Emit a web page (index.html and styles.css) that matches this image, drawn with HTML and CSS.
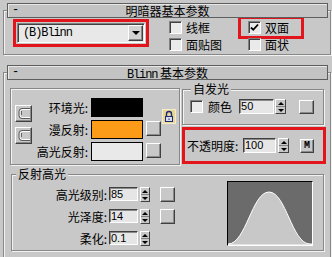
FILE: index.html
```html
<!DOCTYPE html>
<html lang="zh">
<head>
    <meta charset="UTF-8">
    <title>明暗器基本参数</title>
    <link rel="stylesheet" href="styles.css">
</head>
<body>

<div class="rollout">
    <div class="rollout-head"><span class="minus">-</span><span class="rollout-title">明暗器基本参数</span><span></span></div>
    <div class="rollout-body body-shader">
        <div class="mark mark-shader">
            <div class="dropdown">
                <span class="latin">(B)Blinn</span>
                <span class="dropdown-btn"><i class="tri-down"></i></span>
            </div>
        </div>
        <div class="checks">
            <div class="check"><span class="box"></span>线框</div>
            <div class="check mark mark-twosided">
                <span class="box"><svg width="11" height="11" viewBox="0 0 11 11"><path d="M2 5.5l2.3 2.3L9 2.5" fill="none" stroke="#000" stroke-width="1.8"/></svg></span>双面
            </div>
            <div class="check"><span class="box"></span>面贴图</div>
            <div class="check"><span class="box"></span>面状</div>
        </div>
    </div>
</div>

<div class="rollout rollout-next">
    <div class="rollout-head"><span class="minus">-</span><span class="rollout-title"><span class="latin">Blinn</span> 基本参数</span><span></span></div>
    <div class="rollout-body body-basic">
        <div class="top-row">
            <div class="group colors">
                <div class="link-col">
                    <span class="btn link-btn">
                        <svg width="12" height="11" viewBox="0 0 12 11"><path d="M12 1.5H4a2 2 0 0 0-2 2v4a2 2 0 0 0 2 2h8" fill="none" stroke="#fff"/><path d="M12 0.5H4a3 3 0 0 0-3 3v4a3 3 0 0 0 3 3h8" fill="none" stroke="#5a5a5a"/><path d="M3.5 3.5v4" stroke="#000" stroke-dasharray="1 1"/></svg>
                    </span>
                    <span class="btn link-btn">
                        <svg width="12" height="11" viewBox="0 0 12 11"><path d="M12 1.5H4a2 2 0 0 0-2 2v4a2 2 0 0 0 2 2h8" fill="none" stroke="#fff"/><path d="M12 0.5H4a3 3 0 0 0-3 3v4a3 3 0 0 0 3 3h8" fill="none" stroke="#5a5a5a"/><path d="M3.5 3.5v4" stroke="#000" stroke-dasharray="1 1"/></svg>
                    </span>
                </div>
                <div class="color-grid">
                    <span class="label">环境光:</span><span class="swatch sw-ambient"></span><span></span>
                    <span class="label">漫反射:</span><span class="swatch sw-diffuse"></span><span class="btn map-btn"></span>
                    <span class="label">高光反射:</span><span class="swatch sw-specular"></span><span class="btn map-btn"></span>
                </div>
                <span class="lock">
                    <svg width="14" height="15" viewBox="0 0 14 15"><rect x="0.5" y="0.5" width="13" height="14" fill="#e8d694" stroke="#f4ecc8"/><path d="M4.5 7.5V5a2.5 2.5 0 0 1 5 0v2.5" fill="none" stroke="#1c2a78" stroke-width="1.4"/><rect x="3.5" y="7.5" width="7" height="5" fill="#d8dcf0" stroke="#1c2a78"/><path d="M7 9.5v1.5" stroke="#1c2a78"/></svg>
                </span>
            </div>
            <div class="side-col">
                <div class="group self-illum">
                    <div class="group-title">自发光</div>
                    <div class="illum-row">
                        <span class="box"></span>
                        <span class="illum-label">颜色</span>
                        <span class="num num-illum">50</span>
                        <span class="spin"><i class="up"></i><i class="down"></i></span>
                        <span class="btn color-btn"></span>
                    </div>
                </div>
                <div class="mark mark-opacity">
                    <span class="opacity-label">不透明度:</span>
                    <span class="num num-opacity">100</span>
                    <span class="spin"><i class="up"></i><i class="down"></i></span>
                    <span class="btn m-btn">M</span>
                </div>
            </div>
        </div>

        <div class="group specular">
            <div class="group-title">反射高光</div>
            <div class="spec-row">
                <div class="spec-grid">
                    <span class="label">高光级别:</span><span class="num">85</span><span class="spin"><i class="up"></i><i class="down"></i></span><span class="btn spec-btn"></span>
                    <span class="label">光泽度:</span><span class="num">14</span><span class="spin"><i class="up"></i><i class="down"></i></span><span class="btn spec-btn"></span>
                    <span class="label">柔化:</span><span class="num">0.1</span><span class="spin"><i class="up"></i><i class="down"></i></span><span></span>
                </div>
                <div class="curve">
                    <svg width="84" height="63" viewBox="0 0 84 63"><path d="M0 63V62C18 62 24 10 41 10S64 62 82 62H84V63Z" fill="#c8c8c8" stroke="#fff"/></svg>
                </div>
            </div>
        </div>
    </div>
</div>

</body>
</html>
```

FILE: styles.css
```css
* {
    box-sizing: border-box;
}
body {
    margin: 0;
    padding-top: 3px;
    width: 332px;
    height: 257px;
    overflow: hidden;
    background: #c8c8c8;
    color: #000;
    font-family: "Noto Sans CJK SC", sans-serif;
    font-size: 12px;
    line-height: 14px;
}
i {
    font-style: normal;
}
.latin {
    font-family: "Liberation Mono", monospace;
    font-size: 12px;
    letter-spacing: -1.1px;
}

/* rollouts */
.rollout { margin: 0 1px 0 3px; }
.rollout-next { margin-top: 10px; }
.rollout-head {
    position: relative;
    z-index: 1;
    display: grid;
    grid-template-columns: 20px 1fr 20px;
    height: 15px;
    margin: 0 3px 0 4px;
    background: #c3c3c3;
    border: 1px solid #5e5e5e;
    box-shadow: inset 1px 1px 0 #e8e8e8;
    line-height: 13px;
}
.minus {
    padding-left: 4px;
    font-family: "Liberation Mono", monospace;
}
.rollout-title { text-align: center; }
.rollout-body {
    margin-top: -8px;
    border: 1px solid #878787;
    box-shadow: inset 1px 1px 0 #f2f2f2, 1px 1px 0 #f2f2f2;
}
.body-shader {
    display: flex;
    align-items: flex-start;
    height: 45px;
    padding: 8px 0 0 9px;
}
.body-basic {
    height: 185px;
    padding: 15px 0 0 6px;
    border-bottom: none;
}

/* red marks */
.mark { border: 3px solid #e2151c; }
.mark-shader {
    width: 136px;
    height: 28px;
    padding: 1px;
}
.dropdown {
    display: flex;
    align-items: center;
    justify-content: space-between;
    height: 100%;
    padding-left: 5px;
    background: #e8e8e8;
    border: 1px solid;
    border-color: #808080 #fff #fff #808080;
    box-shadow: inset 1px 1px 0 #404040;
}
.dropdown-btn {
    display: flex;
    align-items: center;
    justify-content: center;
    width: 15px;
    height: 16px;
    margin-right: 1px;
    background: #d2d2d2;
    border: 1px solid;
    border-color: #fff #404040 #404040 #fff;
    box-shadow: inset -1px -1px 0 #888;
}
.tri-down {
    border-left: 4px solid transparent;
    border-right: 4px solid transparent;
    border-top: 4px solid #000;
}

/* checkboxes */
.checks {
    display: grid;
    grid-template-columns: 79px 79px;
    grid-auto-rows: 13px;
    row-gap: 4px;
    margin: 2px 0 0 20px;
}
.check {
    display: flex;
    align-items: center;
    gap: 4px;
    line-height: 13px;
}
.box {
    display: flex;
    align-items: center;
    justify-content: center;
    width: 13px;
    height: 13px;
    flex: none;
    background: #eaeaea;
    border: 1px solid;
    border-color: #808080 #fff #fff #808080;
    box-shadow: inset 1px 1px 0 #404040;
}
.mark-twosided {
    align-items: flex-start;
    width: 66px;
    height: 23px;
    margin: -5px 0 -5px -10px;
    padding: 2px 0 0 7px;
}

/* shared controls */
.btn {
    display: block;
    background: #c8c8c8;
    border: 1px solid;
    border-color: #fff #404040 #404040 #fff;
    box-shadow: inset -1px -1px 0 #8a8a8a;
}
.num {
    display: block;
    height: 15px;
    padding-left: 1px;
    background: #e6e6e6;
    border: 1px solid;
    border-color: #404040 #fff #fff #404040;
    box-shadow: inset 1px 1px 0 #8a8a8a;
    font-family: "Liberation Sans", sans-serif;
    font-size: 11px;
    line-height: 13px;
}
.spin {
    display: flex;
    flex-direction: column;
    width: 11px;
    height: 15px;
    background: #c8c8c8;
    border: 1px solid;
    border-color: #fff #404040 #404040 #fff;
}
.spin i {
    flex: 1;
    display: flex;
    align-items: center;
    justify-content: center;
}
.spin .up::after {
    content: "";
    border-left: 3px solid transparent;
    border-right: 3px solid transparent;
    border-bottom: 3px solid #000;
}
.spin .down {
    border-top: 1px solid #808080;
}
.spin .down::after {
    content: "";
    border-left: 3px solid transparent;
    border-right: 3px solid transparent;
    border-top: 3px solid #000;
}

/* group boxes */
.group {
    border: 1px solid #878787;
    box-shadow: inset 1px 1px 0 #f2f2f2, 1px 1px 0 #f2f2f2;
}
.group-title {
    width: fit-content;
    margin: -7px 0 0 8px;
    padding: 0 2px;
    background: #c8c8c8;
    line-height: 12px;
}
.top-row {
    display: flex;
    align-items: flex-start;
}
.colors {
    display: flex;
    align-items: flex-start;
    width: 170px;
    height: 77px;
}
.link-col {
    display: flex;
    flex-direction: column;
    gap: 5px;
    margin: 16px 0 0 4px;
}
.link-btn {
    display: flex;
    align-items: center;
    justify-content: flex-end;
    width: 17px;
    height: 17px;
    padding-right: 1px;
}
.color-grid {
    display: grid;
    grid-template-columns: 56px 52px 15px;
    grid-auto-rows: 19px;
    gap: 3px;
    margin-top: 9px;
}
.label {
    align-self: center;
    text-align: right;
    white-space: nowrap;
}
.swatch { border: 1px solid #000; }
.sw-ambient { background: #000; }
.sw-diffuse { background: #fb9b17; }
.sw-specular { background: #e9e9e9; }
.map-btn {
    height: 15px;
    margin-top: 1px;
}
.lock {
    display: block;
    width: 14px;
    height: 15px;
    margin: 20px 0 0 1px;
}
.lock svg { display: block; }

.side-col {
    width: 144px;
    margin-left: 2px;
}
.self-illum {
    width: 142px;
    height: 36px;
    margin-top: 1px;
}
.illum-row {
    display: flex;
    align-items: center;
    height: 15px;
    margin-top: 4px;
    padding-left: 7px;
}
.illum-label { margin-left: 5px; }
.num-illum {
    width: 35px;
    margin-left: 7px;
}
.illum-row .spin { margin-left: 1px; }
.color-btn {
    width: 15px;
    height: 14px;
    margin-left: 13px;
}
.mark-opacity {
    display: flex;
    align-items: center;
    height: 37px;
    margin-top: 2px;
    padding-left: 2px;
}
.opacity-label { width: 54px; }
.num-opacity {
    width: 33px;
    margin-left: 2px;
}
.mark-opacity .spin { margin-left: 2px; }
.m-btn {
    width: 14px;
    height: 14px;
    margin-left: 11px;
    font-family: "Liberation Mono", monospace;
    font-size: 10px;
    font-weight: bold;
    line-height: 12px;
    text-align: center;
}

.specular {
    width: 313px;
    height: 77px;
    margin: 9px 0 0 1px;
}
.specular .group-title { margin-left: 4px; }
.spec-row {
    display: flex;
    align-items: flex-start;
    margin-top: 1px;
}
.spec-grid {
    display: grid;
    grid-template-columns: 95px 29px 10px 23px;
    grid-auto-rows: 15px;
    column-gap: 2px;
    row-gap: 7px;
    margin-top: 6px;
}
.spec-grid .num {
    height: 14px;
    line-height: 12px;
}
.spec-grid .spin { width: 10px; }
.spec-btn { margin-left: 8px; }
.curve {
    width: 86px;
    height: 65px;
    margin: 0 10px 0 auto;
    background: #6b6b6b;
    border: 1px solid;
    border-color: #000 #fff #fff #000;
}
.curve svg { display: block; }
```
